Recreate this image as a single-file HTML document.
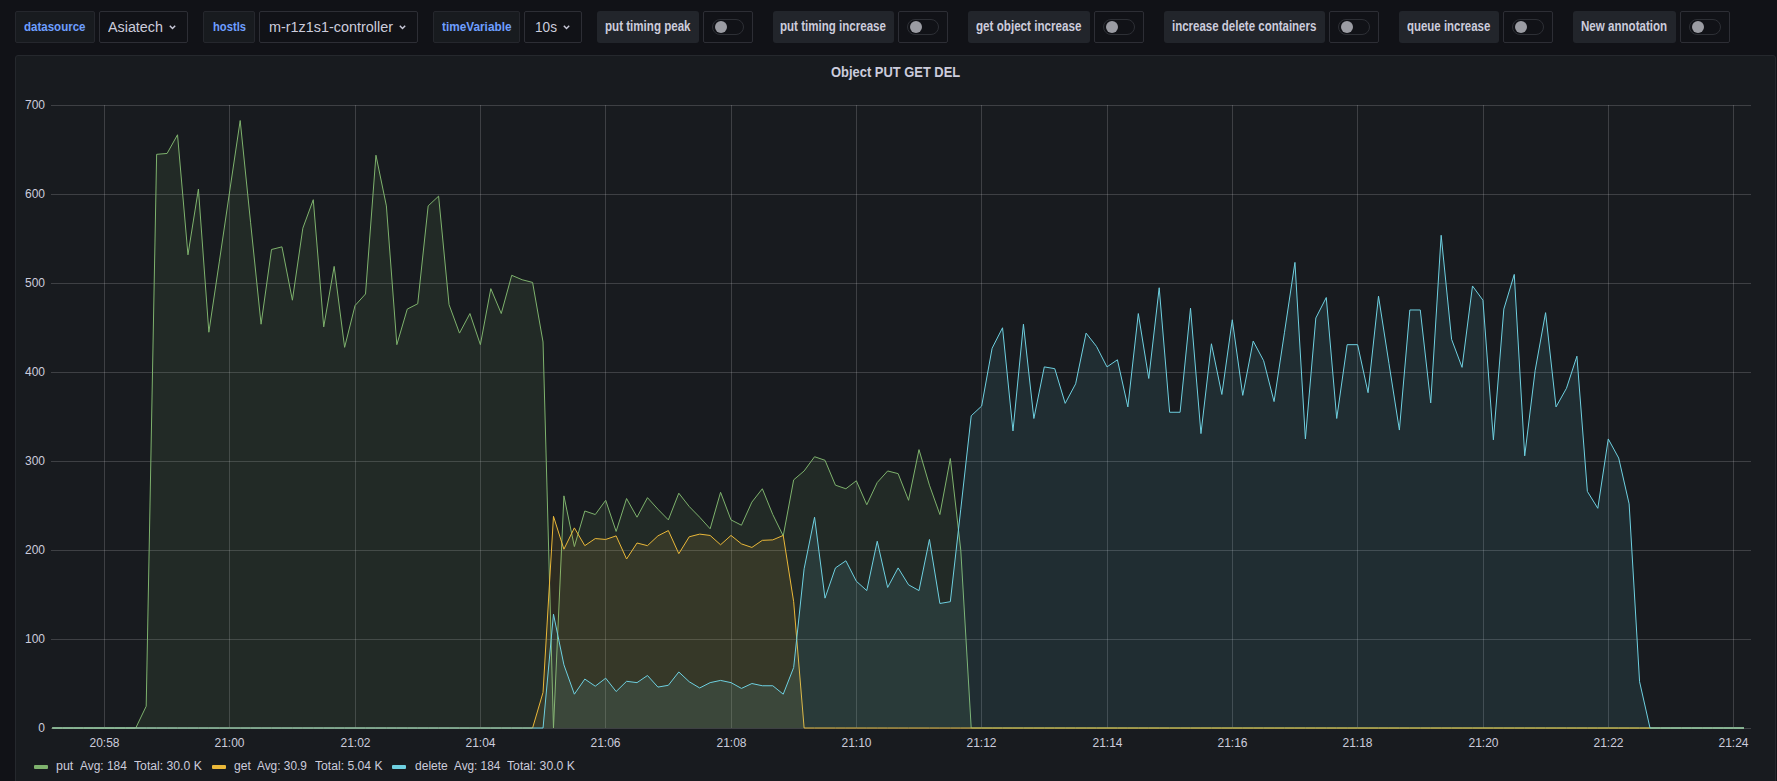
<!DOCTYPE html>
<html><head><meta charset="utf-8">
<style>
*{box-sizing:border-box;margin:0;padding:0}
html,body{width:1777px;height:781px;overflow:hidden;background:#111217;font-family:"Liberation Sans",sans-serif;color:#ccccdc}
.st{display:inline-block;transform-origin:0 50%;white-space:nowrap}
.vl{position:absolute;top:11px;height:32px;border:1px solid #25272d;background:#181b1f;border-radius:2px}
.vlt{position:absolute;top:11px;height:32px;line-height:32px;color:#6e9fff;font-size:13px;font-weight:bold;white-space:nowrap}
.sel{position:absolute;top:11px;height:32px;border:1px solid #2d2e35;background:#111217;border-radius:2px}
.selt{position:absolute;top:11px;height:32px;line-height:32px;color:#ccccdc;font-size:15.5px;white-space:nowrap}
.chev{position:absolute;top:24.5px;width:7px;height:5px}
.tl{position:absolute;top:11px;height:32px;background:#22252b;border-radius:3px}
.tlt{position:absolute;top:11px;height:32px;line-height:31px;color:#ccccdc;font-size:14px;font-weight:bold;white-space:nowrap}
.tg{position:absolute;top:11px;width:50px;height:32px;border:1px solid #2d2e35;background:#111217;border-radius:2px}
.tg .pill{position:absolute;left:8px;top:7px;width:32px;height:16px;border:1px solid #2d2f35;border-radius:8px}
.tg .knob{position:absolute;left:11px;top:9px;width:12px;height:12px;border-radius:6px;background:#9b9ca3}
.panel{position:absolute;left:15px;top:55px;width:1761px;height:760px;background:#181b1f;border:1px solid #25282d;border-radius:3px}
.title{position:absolute;top:62px;height:20px;line-height:20px;font-size:14.5px;font-weight:bold;color:#ccccdc;white-space:nowrap}
.yl{position:absolute;left:0;width:45px;text-align:right;font-size:12px;line-height:14px;color:#ccccdc}
.xl{position:absolute;top:736px;width:60px;text-align:center;font-size:12px;line-height:14px;color:#ccccdc}
.lg{position:absolute;top:759px;font-size:12px;line-height:14px;color:#ccccdc;white-space:nowrap}
.sw{position:absolute;top:765px;width:14px;height:4px;border-radius:1px}
svg{position:absolute;left:0;top:0}
</style></head><body>
<div class="vl" style="left:15px;width:80px"></div><div class="vlt" style="left:24.2px"><span class="st" style="margin-left:-0.00px;transform:scaleX(0.8862)">datasource</span></div><div class="sel" style="left:99px;width:89px"></div><div class="selt" style="left:108.4px"><span class="st" style="margin-left:-0.00px;transform:scaleX(0.9244)">Asiatech</span></div><svg class="chev" style="left:169px" width="7" height="5" viewBox="0 0 7 5"><path d="M0.8 0.8 L3.5 3.6 L6.2 0.8" fill="none" stroke="#ccccdc" stroke-width="1.4"/></svg><div class="vl" style="left:203px;width:52px"></div><div class="vlt" style="left:212.8px"><span class="st" style="margin-left:-0.00px;transform:scaleX(0.8616)">hostls</span></div><div class="sel" style="left:259px;width:159px"></div><div class="selt" style="left:268.7px"><span class="st" style="margin-left:-0.00px;transform:scaleX(0.9288)">m-r1z1s1-controller</span></div><svg class="chev" style="left:399px" width="7" height="5" viewBox="0 0 7 5"><path d="M0.8 0.8 L3.5 3.6 L6.2 0.8" fill="none" stroke="#ccccdc" stroke-width="1.4"/></svg><div class="vl" style="left:433px;width:87px"></div><div class="vlt" style="left:442.0px"><span class="st" style="margin-left:-0.00px;transform:scaleX(0.9073)">timeVariable</span></div><div class="sel" style="left:524px;width:58px"></div><div class="selt" style="left:534.5px"><span class="st" style="margin-left:-0.00px;transform:scaleX(0.8800)">10s</span></div><svg class="chev" style="left:563px" width="7" height="5" viewBox="0 0 7 5"><path d="M0.8 0.8 L3.5 3.6 L6.2 0.8" fill="none" stroke="#ccccdc" stroke-width="1.4"/></svg><div class="tl" style="left:597px;width:102px"></div><div class="tlt" style="left:604.8px"><span class="st" style="margin-left:-0.00px;transform:scaleX(0.8271)">put timing peak</span></div><div class="tg" style="left:703px"><div class="pill"></div><div class="knob"></div></div><div class="tl" style="left:773px;width:121px"></div><div class="tlt" style="left:780.2px"><span class="st" style="margin-left:-0.00px;transform:scaleX(0.8255)">put timing increase</span></div><div class="tg" style="left:898px"><div class="pill"></div><div class="knob"></div></div><div class="tl" style="left:968px;width:122px"></div><div class="tlt" style="left:976.0px"><span class="st" style="margin-left:-0.00px;transform:scaleX(0.8312)">get object increase</span></div><div class="tg" style="left:1094px"><div class="pill"></div><div class="knob"></div></div><div class="tl" style="left:1164px;width:161px"></div><div class="tlt" style="left:1172.0px"><span class="st" style="margin-left:-0.00px;transform:scaleX(0.8209)">increase delete containers</span></div><div class="tg" style="left:1329px"><div class="pill"></div><div class="knob"></div></div><div class="tl" style="left:1399px;width:100px"></div><div class="tlt" style="left:1407.0px"><span class="st" style="margin-left:-0.00px;transform:scaleX(0.8175)">queue increase</span></div><div class="tg" style="left:1503px"><div class="pill"></div><div class="knob"></div></div><div class="tl" style="left:1573px;width:103px"></div><div class="tlt" style="left:1581.2px"><span class="st" style="margin-left:-0.00px;transform:scaleX(0.8263)">New annotation</span></div><div class="tg" style="left:1680px"><div class="pill"></div><div class="knob"></div></div>
<div class="panel"></div>
<div class="title" style="left:831px"><span class="st" style="margin-left:-0.00px;transform:scaleX(0.8910)">Object PUT GET DEL</span></div>
<div class="yl" style="top:721px">0</div><div class="yl" style="top:632px">100</div><div class="yl" style="top:543px">200</div><div class="yl" style="top:454px">300</div><div class="yl" style="top:365px">400</div><div class="yl" style="top:276px">500</div><div class="yl" style="top:187px">600</div><div class="yl" style="top:98px">700</div>
<div class="xl" style="left:74.5px">20:58</div><div class="xl" style="left:199.5px">21:00</div><div class="xl" style="left:325.5px">21:02</div><div class="xl" style="left:450.5px">21:04</div><div class="xl" style="left:575.5px">21:06</div><div class="xl" style="left:701.5px">21:08</div><div class="xl" style="left:826.5px">21:10</div><div class="xl" style="left:951.5px">21:12</div><div class="xl" style="left:1077.5px">21:14</div><div class="xl" style="left:1202.5px">21:16</div><div class="xl" style="left:1327.5px">21:18</div><div class="xl" style="left:1453.5px">21:20</div><div class="xl" style="left:1578.5px">21:22</div><div class="xl" style="left:1703.5px">21:24</div>
<svg width="1777" height="781" viewBox="0 0 1777 781">
<g stroke="rgba(216,217,218,0.2)" stroke-width="1" shape-rendering="crispEdges"><line x1="51" x2="1751" y1="105.5" y2="105.5" /><line x1="51" x2="1751" y1="194.5" y2="194.5" /><line x1="51" x2="1751" y1="283.5" y2="283.5" /><line x1="51" x2="1751" y1="372.5" y2="372.5" /><line x1="51" x2="1751" y1="461.5" y2="461.5" /><line x1="51" x2="1751" y1="550.5" y2="550.5" /><line x1="51" x2="1751" y1="639.5" y2="639.5" /><line x1="51" x2="1751" y1="728.5" y2="728.5" /><line x1="104.5" x2="104.5" y1="105" y2="728" /><line x1="229.5" x2="229.5" y1="105" y2="728" /><line x1="355.5" x2="355.5" y1="105" y2="728" /><line x1="480.5" x2="480.5" y1="105" y2="728" /><line x1="605.5" x2="605.5" y1="105" y2="728" /><line x1="731.5" x2="731.5" y1="105" y2="728" /><line x1="856.5" x2="856.5" y1="105" y2="728" /><line x1="981.5" x2="981.5" y1="105" y2="728" /><line x1="1107.5" x2="1107.5" y1="105" y2="728" /><line x1="1232.5" x2="1232.5" y1="105" y2="728" /><line x1="1357.5" x2="1357.5" y1="105" y2="728" /><line x1="1483.5" x2="1483.5" y1="105" y2="728" /><line x1="1608.5" x2="1608.5" y1="105" y2="728" /><line x1="1733.5" x2="1733.5" y1="105" y2="728" /></g>
<path d="M52.20 728.00 L62.64 728.00 L73.09 728.00 L83.53 728.00 L93.97 728.00 L104.42 728.00 L114.86 728.00 L125.30 728.00 L135.75 728.00 L146.19 706.21 L156.63 154.34 L167.08 153.45 L177.52 134.77 L187.96 254.84 L198.41 189.02 L208.85 332.22 L219.29 261.95 L229.74 190.80 L240.18 120.54 L250.62 222.82 L261.07 324.21 L271.51 249.50 L281.95 246.83 L292.40 300.20 L302.84 228.16 L313.28 199.70 L323.73 326.88 L334.17 266.40 L344.61 347.34 L355.06 305.54 L365.50 293.97 L375.94 155.23 L386.39 205.92 L396.83 344.67 L407.27 309.09 L417.72 303.76 L428.16 205.92 L438.60 196.14 L449.05 304.65 L459.49 333.11 L469.93 313.54 L480.38 344.67 L490.82 288.64 L501.26 313.54 L511.71 275.30 L522.15 279.74 L532.59 282.41 L543.04 342.00 L553.48 728.00 L563.92 495.87 L574.37 546.56 L584.81 510.99 L595.25 514.54 L605.69 500.31 L616.14 531.44 L626.58 498.53 L637.02 517.21 L647.47 497.65 L657.91 509.21 L668.35 519.88 L678.80 493.20 L689.24 506.54 L699.68 517.21 L710.13 528.77 L720.57 492.31 L731.01 519.88 L741.46 525.22 L751.90 502.09 L762.34 488.75 L772.79 514.54 L783.23 535.89 L793.67 479.86 L804.12 470.96 L814.56 456.73 L825.00 460.29 L835.45 485.19 L845.89 488.75 L856.33 480.75 L866.78 504.76 L877.22 482.53 L887.66 470.96 L898.11 473.63 L908.55 500.31 L918.99 449.62 L929.44 485.19 L939.88 514.54 L950.32 458.51 L960.77 550.12 L971.21 728.00 L981.65 728.00 L992.10 728.00 L1002.54 728.00 L1012.98 728.00 L1023.43 728.00 L1033.87 728.00 L1044.31 728.00 L1054.76 728.00 L1065.20 728.00 L1075.64 728.00 L1086.09 728.00 L1096.53 728.00 L1106.97 728.00 L1117.42 728.00 L1127.86 728.00 L1138.30 728.00 L1148.75 728.00 L1159.19 728.00 L1169.63 728.00 L1180.08 728.00 L1190.52 728.00 L1200.96 728.00 L1211.41 728.00 L1221.85 728.00 L1232.29 728.00 L1242.74 728.00 L1253.18 728.00 L1263.62 728.00 L1274.07 728.00 L1284.51 728.00 L1294.95 728.00 L1305.40 728.00 L1315.84 728.00 L1326.28 728.00 L1336.73 728.00 L1347.17 728.00 L1357.61 728.00 L1368.06 728.00 L1378.50 728.00 L1388.94 728.00 L1399.39 728.00 L1409.83 728.00 L1420.27 728.00 L1430.72 728.00 L1441.16 728.00 L1451.60 728.00 L1462.05 728.00 L1472.49 728.00 L1482.93 728.00 L1493.38 728.00 L1503.82 728.00 L1514.26 728.00 L1524.71 728.00 L1535.15 728.00 L1545.59 728.00 L1556.04 728.00 L1566.48 728.00 L1576.92 728.00 L1587.37 728.00 L1597.81 728.00 L1608.25 728.00 L1618.70 728.00 L1629.14 728.00 L1639.58 728.00 L1650.02 728.00 L1660.47 728.00 L1670.91 728.00 L1681.35 728.00 L1691.80 728.00 L1702.24 728.00 L1712.68 728.00 L1723.13 728.00 L1733.57 728.00 L1744.01 728.00 L1744.01 728.00 L52.20 728.00 Z" fill="#7EB26D" fill-opacity="0.1" stroke="none"/><path d="M52.20 728.00 L62.64 728.00 L73.09 728.00 L83.53 728.00 L93.97 728.00 L104.42 728.00 L114.86 728.00 L125.30 728.00 L135.75 728.00 L146.19 706.21 L156.63 154.34 L167.08 153.45 L177.52 134.77 L187.96 254.84 L198.41 189.02 L208.85 332.22 L219.29 261.95 L229.74 190.80 L240.18 120.54 L250.62 222.82 L261.07 324.21 L271.51 249.50 L281.95 246.83 L292.40 300.20 L302.84 228.16 L313.28 199.70 L323.73 326.88 L334.17 266.40 L344.61 347.34 L355.06 305.54 L365.50 293.97 L375.94 155.23 L386.39 205.92 L396.83 344.67 L407.27 309.09 L417.72 303.76 L428.16 205.92 L438.60 196.14 L449.05 304.65 L459.49 333.11 L469.93 313.54 L480.38 344.67 L490.82 288.64 L501.26 313.54 L511.71 275.30 L522.15 279.74 L532.59 282.41 L543.04 342.00 L553.48 728.00 L563.92 495.87 L574.37 546.56 L584.81 510.99 L595.25 514.54 L605.69 500.31 L616.14 531.44 L626.58 498.53 L637.02 517.21 L647.47 497.65 L657.91 509.21 L668.35 519.88 L678.80 493.20 L689.24 506.54 L699.68 517.21 L710.13 528.77 L720.57 492.31 L731.01 519.88 L741.46 525.22 L751.90 502.09 L762.34 488.75 L772.79 514.54 L783.23 535.89 L793.67 479.86 L804.12 470.96 L814.56 456.73 L825.00 460.29 L835.45 485.19 L845.89 488.75 L856.33 480.75 L866.78 504.76 L877.22 482.53 L887.66 470.96 L898.11 473.63 L908.55 500.31 L918.99 449.62 L929.44 485.19 L939.88 514.54 L950.32 458.51 L960.77 550.12 L971.21 728.00 L981.65 728.00 L992.10 728.00 L1002.54 728.00 L1012.98 728.00 L1023.43 728.00 L1033.87 728.00 L1044.31 728.00 L1054.76 728.00 L1065.20 728.00 L1075.64 728.00 L1086.09 728.00 L1096.53 728.00 L1106.97 728.00 L1117.42 728.00 L1127.86 728.00 L1138.30 728.00 L1148.75 728.00 L1159.19 728.00 L1169.63 728.00 L1180.08 728.00 L1190.52 728.00 L1200.96 728.00 L1211.41 728.00 L1221.85 728.00 L1232.29 728.00 L1242.74 728.00 L1253.18 728.00 L1263.62 728.00 L1274.07 728.00 L1284.51 728.00 L1294.95 728.00 L1305.40 728.00 L1315.84 728.00 L1326.28 728.00 L1336.73 728.00 L1347.17 728.00 L1357.61 728.00 L1368.06 728.00 L1378.50 728.00 L1388.94 728.00 L1399.39 728.00 L1409.83 728.00 L1420.27 728.00 L1430.72 728.00 L1441.16 728.00 L1451.60 728.00 L1462.05 728.00 L1472.49 728.00 L1482.93 728.00 L1493.38 728.00 L1503.82 728.00 L1514.26 728.00 L1524.71 728.00 L1535.15 728.00 L1545.59 728.00 L1556.04 728.00 L1566.48 728.00 L1576.92 728.00 L1587.37 728.00 L1597.81 728.00 L1608.25 728.00 L1618.70 728.00 L1629.14 728.00 L1639.58 728.00 L1650.02 728.00 L1660.47 728.00 L1670.91 728.00 L1681.35 728.00 L1691.80 728.00 L1702.24 728.00 L1712.68 728.00 L1723.13 728.00 L1733.57 728.00 L1744.01 728.00" fill="none" stroke="#7EB26D" stroke-width="1" stroke-linejoin="round"/><path d="M52.20 728.00 L62.64 728.00 L73.09 728.00 L83.53 728.00 L93.97 728.00 L104.42 728.00 L114.86 728.00 L125.30 728.00 L135.75 728.00 L146.19 728.00 L156.63 728.00 L167.08 728.00 L177.52 728.00 L187.96 728.00 L198.41 728.00 L208.85 728.00 L219.29 728.00 L229.74 728.00 L240.18 728.00 L250.62 728.00 L261.07 728.00 L271.51 728.00 L281.95 728.00 L292.40 728.00 L302.84 728.00 L313.28 728.00 L323.73 728.00 L334.17 728.00 L344.61 728.00 L355.06 728.00 L365.50 728.00 L375.94 728.00 L386.39 728.00 L396.83 728.00 L407.27 728.00 L417.72 728.00 L428.16 728.00 L438.60 728.00 L449.05 728.00 L459.49 728.00 L469.93 728.00 L480.38 728.00 L490.82 728.00 L501.26 728.00 L511.71 728.00 L522.15 728.00 L532.59 728.00 L543.04 692.42 L553.48 516.32 L563.92 549.23 L574.37 527.88 L584.81 545.67 L595.25 538.56 L605.69 539.45 L616.14 535.89 L626.58 559.01 L637.02 543.00 L647.47 545.67 L657.91 535.89 L668.35 530.55 L678.80 553.68 L689.24 536.78 L699.68 534.11 L710.13 535.44 L720.57 544.78 L731.01 535.44 L741.46 543.89 L751.90 547.45 L762.34 540.34 L772.79 539.89 L783.23 535.44 L793.67 601.71 L804.12 728.00 L814.56 728.00 L825.00 728.00 L835.45 728.00 L845.89 728.00 L856.33 728.00 L866.78 728.00 L877.22 728.00 L887.66 728.00 L898.11 728.00 L908.55 728.00 L918.99 728.00 L929.44 728.00 L939.88 728.00 L950.32 728.00 L960.77 728.00 L971.21 728.00 L981.65 728.00 L992.10 728.00 L1002.54 728.00 L1012.98 728.00 L1023.43 728.00 L1033.87 728.00 L1044.31 728.00 L1054.76 728.00 L1065.20 728.00 L1075.64 728.00 L1086.09 728.00 L1096.53 728.00 L1106.97 728.00 L1117.42 728.00 L1127.86 728.00 L1138.30 728.00 L1148.75 728.00 L1159.19 728.00 L1169.63 728.00 L1180.08 728.00 L1190.52 728.00 L1200.96 728.00 L1211.41 728.00 L1221.85 728.00 L1232.29 728.00 L1242.74 728.00 L1253.18 728.00 L1263.62 728.00 L1274.07 728.00 L1284.51 728.00 L1294.95 728.00 L1305.40 728.00 L1315.84 728.00 L1326.28 728.00 L1336.73 728.00 L1347.17 728.00 L1357.61 728.00 L1368.06 728.00 L1378.50 728.00 L1388.94 728.00 L1399.39 728.00 L1409.83 728.00 L1420.27 728.00 L1430.72 728.00 L1441.16 728.00 L1451.60 728.00 L1462.05 728.00 L1472.49 728.00 L1482.93 728.00 L1493.38 728.00 L1503.82 728.00 L1514.26 728.00 L1524.71 728.00 L1535.15 728.00 L1545.59 728.00 L1556.04 728.00 L1566.48 728.00 L1576.92 728.00 L1587.37 728.00 L1597.81 728.00 L1608.25 728.00 L1618.70 728.00 L1629.14 728.00 L1639.58 728.00 L1650.02 728.00 L1660.47 728.00 L1670.91 728.00 L1681.35 728.00 L1691.80 728.00 L1702.24 728.00 L1712.68 728.00 L1723.13 728.00 L1733.57 728.00 L1744.01 728.00 L1744.01 728.00 L52.20 728.00 Z" fill="#EAB839" fill-opacity="0.1" stroke="none"/><path d="M52.20 728.00 L62.64 728.00 L73.09 728.00 L83.53 728.00 L93.97 728.00 L104.42 728.00 L114.86 728.00 L125.30 728.00 L135.75 728.00 L146.19 728.00 L156.63 728.00 L167.08 728.00 L177.52 728.00 L187.96 728.00 L198.41 728.00 L208.85 728.00 L219.29 728.00 L229.74 728.00 L240.18 728.00 L250.62 728.00 L261.07 728.00 L271.51 728.00 L281.95 728.00 L292.40 728.00 L302.84 728.00 L313.28 728.00 L323.73 728.00 L334.17 728.00 L344.61 728.00 L355.06 728.00 L365.50 728.00 L375.94 728.00 L386.39 728.00 L396.83 728.00 L407.27 728.00 L417.72 728.00 L428.16 728.00 L438.60 728.00 L449.05 728.00 L459.49 728.00 L469.93 728.00 L480.38 728.00 L490.82 728.00 L501.26 728.00 L511.71 728.00 L522.15 728.00 L532.59 728.00 L543.04 692.42 L553.48 516.32 L563.92 549.23 L574.37 527.88 L584.81 545.67 L595.25 538.56 L605.69 539.45 L616.14 535.89 L626.58 559.01 L637.02 543.00 L647.47 545.67 L657.91 535.89 L668.35 530.55 L678.80 553.68 L689.24 536.78 L699.68 534.11 L710.13 535.44 L720.57 544.78 L731.01 535.44 L741.46 543.89 L751.90 547.45 L762.34 540.34 L772.79 539.89 L783.23 535.44 L793.67 601.71 L804.12 728.00 L814.56 728.00 L825.00 728.00 L835.45 728.00 L845.89 728.00 L856.33 728.00 L866.78 728.00 L877.22 728.00 L887.66 728.00 L898.11 728.00 L908.55 728.00 L918.99 728.00 L929.44 728.00 L939.88 728.00 L950.32 728.00 L960.77 728.00 L971.21 728.00 L981.65 728.00 L992.10 728.00 L1002.54 728.00 L1012.98 728.00 L1023.43 728.00 L1033.87 728.00 L1044.31 728.00 L1054.76 728.00 L1065.20 728.00 L1075.64 728.00 L1086.09 728.00 L1096.53 728.00 L1106.97 728.00 L1117.42 728.00 L1127.86 728.00 L1138.30 728.00 L1148.75 728.00 L1159.19 728.00 L1169.63 728.00 L1180.08 728.00 L1190.52 728.00 L1200.96 728.00 L1211.41 728.00 L1221.85 728.00 L1232.29 728.00 L1242.74 728.00 L1253.18 728.00 L1263.62 728.00 L1274.07 728.00 L1284.51 728.00 L1294.95 728.00 L1305.40 728.00 L1315.84 728.00 L1326.28 728.00 L1336.73 728.00 L1347.17 728.00 L1357.61 728.00 L1368.06 728.00 L1378.50 728.00 L1388.94 728.00 L1399.39 728.00 L1409.83 728.00 L1420.27 728.00 L1430.72 728.00 L1441.16 728.00 L1451.60 728.00 L1462.05 728.00 L1472.49 728.00 L1482.93 728.00 L1493.38 728.00 L1503.82 728.00 L1514.26 728.00 L1524.71 728.00 L1535.15 728.00 L1545.59 728.00 L1556.04 728.00 L1566.48 728.00 L1576.92 728.00 L1587.37 728.00 L1597.81 728.00 L1608.25 728.00 L1618.70 728.00 L1629.14 728.00 L1639.58 728.00 L1650.02 728.00 L1660.47 728.00 L1670.91 728.00 L1681.35 728.00 L1691.80 728.00 L1702.24 728.00 L1712.68 728.00 L1723.13 728.00 L1733.57 728.00 L1744.01 728.00" fill="none" stroke="#EAB839" stroke-width="1" stroke-linejoin="round"/><path d="M52.20 728.00 L62.64 728.00 L73.09 728.00 L83.53 728.00 L93.97 728.00 L104.42 728.00 L114.86 728.00 L125.30 728.00 L135.75 728.00 L146.19 728.00 L156.63 728.00 L167.08 728.00 L177.52 728.00 L187.96 728.00 L198.41 728.00 L208.85 728.00 L219.29 728.00 L229.74 728.00 L240.18 728.00 L250.62 728.00 L261.07 728.00 L271.51 728.00 L281.95 728.00 L292.40 728.00 L302.84 728.00 L313.28 728.00 L323.73 728.00 L334.17 728.00 L344.61 728.00 L355.06 728.00 L365.50 728.00 L375.94 728.00 L386.39 728.00 L396.83 728.00 L407.27 728.00 L417.72 728.00 L428.16 728.00 L438.60 728.00 L449.05 728.00 L459.49 728.00 L469.93 728.00 L480.38 728.00 L490.82 728.00 L501.26 728.00 L511.71 728.00 L522.15 728.00 L532.59 728.00 L543.04 728.00 L553.48 614.16 L563.92 664.85 L574.37 694.20 L584.81 679.08 L595.25 686.20 L605.69 678.19 L616.14 691.53 L626.58 681.31 L637.02 682.64 L647.47 675.53 L657.91 687.09 L668.35 685.31 L678.80 671.97 L689.24 681.75 L699.68 687.98 L710.13 682.64 L720.57 680.42 L731.01 682.64 L741.46 688.42 L751.90 683.53 L762.34 685.75 L772.79 685.75 L783.23 694.20 L793.67 667.52 L804.12 568.80 L814.56 517.21 L825.00 598.15 L835.45 567.91 L845.89 560.79 L856.33 581.25 L866.78 590.59 L877.22 541.23 L887.66 587.47 L898.11 567.91 L908.55 584.81 L918.99 590.59 L929.44 539.45 L939.88 603.48 L950.32 601.71 L960.77 509.21 L971.21 415.82 L981.65 406.04 L992.10 348.23 L1002.54 327.77 L1012.98 430.94 L1023.43 324.21 L1033.87 418.49 L1044.31 366.90 L1054.76 368.68 L1065.20 403.37 L1075.64 383.80 L1086.09 333.11 L1096.53 346.45 L1106.97 366.90 L1117.42 359.79 L1127.86 406.93 L1138.30 313.54 L1148.75 378.47 L1159.19 287.75 L1169.63 412.26 L1180.08 412.26 L1190.52 308.20 L1200.96 433.61 L1211.41 343.78 L1221.85 394.48 L1232.29 319.77 L1242.74 395.36 L1253.18 341.11 L1263.62 360.68 L1274.07 401.59 L1284.51 332.22 L1294.95 262.40 L1305.40 438.94 L1315.84 317.99 L1326.28 297.53 L1336.73 418.49 L1347.17 344.67 L1357.61 344.67 L1368.06 392.70 L1378.50 296.20 L1388.94 363.35 L1399.39 430.05 L1409.83 309.98 L1420.27 309.98 L1430.72 402.92 L1441.16 235.27 L1451.60 339.33 L1462.05 367.35 L1472.49 285.97 L1482.93 300.20 L1493.38 439.83 L1503.82 309.09 L1514.26 274.41 L1524.71 455.84 L1535.15 370.46 L1545.59 312.65 L1556.04 406.93 L1566.48 388.25 L1576.92 356.23 L1587.37 491.42 L1597.81 508.32 L1608.25 438.94 L1618.70 458.07 L1629.14 503.87 L1639.58 681.75 L1650.02 728.00 L1660.47 728.00 L1670.91 728.00 L1681.35 728.00 L1691.80 728.00 L1702.24 728.00 L1712.68 728.00 L1723.13 728.00 L1733.57 728.00 L1744.01 728.00 L1744.01 728.00 L52.20 728.00 Z" fill="#6ED0E0" fill-opacity="0.1" stroke="none"/><path d="M52.20 728.00 L62.64 728.00 L73.09 728.00 L83.53 728.00 L93.97 728.00 L104.42 728.00 L114.86 728.00 L125.30 728.00 L135.75 728.00 L146.19 728.00 L156.63 728.00 L167.08 728.00 L177.52 728.00 L187.96 728.00 L198.41 728.00 L208.85 728.00 L219.29 728.00 L229.74 728.00 L240.18 728.00 L250.62 728.00 L261.07 728.00 L271.51 728.00 L281.95 728.00 L292.40 728.00 L302.84 728.00 L313.28 728.00 L323.73 728.00 L334.17 728.00 L344.61 728.00 L355.06 728.00 L365.50 728.00 L375.94 728.00 L386.39 728.00 L396.83 728.00 L407.27 728.00 L417.72 728.00 L428.16 728.00 L438.60 728.00 L449.05 728.00 L459.49 728.00 L469.93 728.00 L480.38 728.00 L490.82 728.00 L501.26 728.00 L511.71 728.00 L522.15 728.00 L532.59 728.00 L543.04 728.00 L553.48 614.16 L563.92 664.85 L574.37 694.20 L584.81 679.08 L595.25 686.20 L605.69 678.19 L616.14 691.53 L626.58 681.31 L637.02 682.64 L647.47 675.53 L657.91 687.09 L668.35 685.31 L678.80 671.97 L689.24 681.75 L699.68 687.98 L710.13 682.64 L720.57 680.42 L731.01 682.64 L741.46 688.42 L751.90 683.53 L762.34 685.75 L772.79 685.75 L783.23 694.20 L793.67 667.52 L804.12 568.80 L814.56 517.21 L825.00 598.15 L835.45 567.91 L845.89 560.79 L856.33 581.25 L866.78 590.59 L877.22 541.23 L887.66 587.47 L898.11 567.91 L908.55 584.81 L918.99 590.59 L929.44 539.45 L939.88 603.48 L950.32 601.71 L960.77 509.21 L971.21 415.82 L981.65 406.04 L992.10 348.23 L1002.54 327.77 L1012.98 430.94 L1023.43 324.21 L1033.87 418.49 L1044.31 366.90 L1054.76 368.68 L1065.20 403.37 L1075.64 383.80 L1086.09 333.11 L1096.53 346.45 L1106.97 366.90 L1117.42 359.79 L1127.86 406.93 L1138.30 313.54 L1148.75 378.47 L1159.19 287.75 L1169.63 412.26 L1180.08 412.26 L1190.52 308.20 L1200.96 433.61 L1211.41 343.78 L1221.85 394.48 L1232.29 319.77 L1242.74 395.36 L1253.18 341.11 L1263.62 360.68 L1274.07 401.59 L1284.51 332.22 L1294.95 262.40 L1305.40 438.94 L1315.84 317.99 L1326.28 297.53 L1336.73 418.49 L1347.17 344.67 L1357.61 344.67 L1368.06 392.70 L1378.50 296.20 L1388.94 363.35 L1399.39 430.05 L1409.83 309.98 L1420.27 309.98 L1430.72 402.92 L1441.16 235.27 L1451.60 339.33 L1462.05 367.35 L1472.49 285.97 L1482.93 300.20 L1493.38 439.83 L1503.82 309.09 L1514.26 274.41 L1524.71 455.84 L1535.15 370.46 L1545.59 312.65 L1556.04 406.93 L1566.48 388.25 L1576.92 356.23 L1587.37 491.42 L1597.81 508.32 L1608.25 438.94 L1618.70 458.07 L1629.14 503.87 L1639.58 681.75 L1650.02 728.00 L1660.47 728.00 L1670.91 728.00 L1681.35 728.00 L1691.80 728.00 L1702.24 728.00 L1712.68 728.00 L1723.13 728.00 L1733.57 728.00 L1744.01 728.00" fill="none" stroke="#6ED0E0" stroke-width="1" stroke-linejoin="round"/>
</svg>
<div class="sw" style="left:34px;background:#7EB26D"></div><div class="sw" style="left:212px;background:#EAB839"></div><div class="sw" style="left:392px;background:#6ED0E0"></div><div class="lg" style="left:56.2px"><span class="st" style="margin-left:-0.00px;transform:scaleX(1.0359)">put</span></div><div class="lg" style="left:79.9px"><span class="st" style="margin-left:-0.00px;transform:scaleX(0.9936)">Avg: 184</span></div><div class="lg" style="left:133.6px"><span class="st" style="margin-left:-0.00px;transform:scaleX(1.0165)">Total: 30.0 K</span></div><div class="lg" style="left:233.7px"><span class="st" style="margin-left:-0.00px;transform:scaleX(1.0120)">get</span></div><div class="lg" style="left:257.2px"><span class="st" style="margin-left:-0.00px;transform:scaleX(0.9881)">Avg: 30.9</span></div><div class="lg" style="left:314.5px"><span class="st" style="margin-left:-0.00px;transform:scaleX(1.0120)">Total: 5.04 K</span></div><div class="lg" style="left:414.6px"><span class="st" style="margin-left:-0.00px;transform:scaleX(1.0031)">delete</span></div><div class="lg" style="left:454.1px"><span class="st" style="margin-left:-0.00px;transform:scaleX(0.9809)">Avg: 184</span></div><div class="lg" style="left:507.1px"><span class="st" style="margin-left:-0.00px;transform:scaleX(1.0180)">Total: 30.0 K</span></div>
</body></html>
